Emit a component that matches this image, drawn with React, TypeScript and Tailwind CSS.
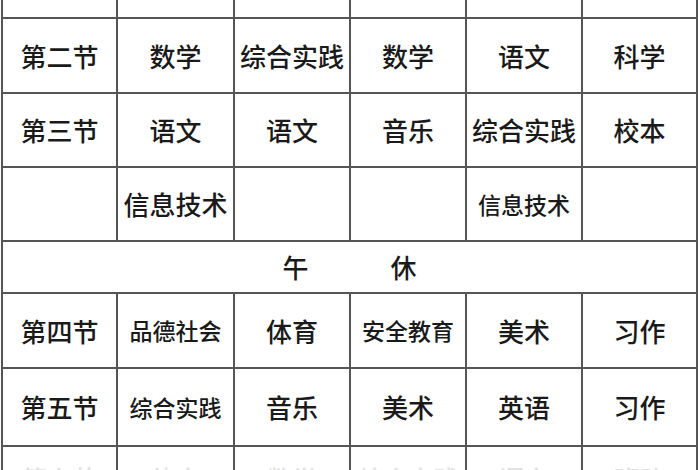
import React from "react";

type Cell = { text: string; small?: boolean };

const rows: Cell[][] = [
  [{ text: "" }, { text: "" }, { text: "" }, { text: "" }, { text: "" }, { text: "" }],
  [
    { text: "第二节" },
    { text: "数学" },
    { text: "综合实践" },
    { text: "数学" },
    { text: "语文" },
    { text: "科学" },
  ],
  [
    { text: "第三节" },
    { text: "语文" },
    { text: "语文" },
    { text: "音乐" },
    { text: "综合实践" },
    { text: "校本" },
  ],
  [
    { text: "" },
    { text: "信息技术" },
    { text: "" },
    { text: "" },
    { text: "信息技术", small: true },
    { text: "" },
  ],
];

const afternoon: Cell[][] = [
  [
    { text: "第四节" },
    { text: "品德社会", small: true },
    { text: "体育" },
    { text: "安全教育", small: true },
    { text: "美术" },
    { text: "习作" },
  ],
  [
    { text: "第五节" },
    { text: "综合实践", small: true },
    { text: "音乐" },
    { text: "美术" },
    { text: "英语" },
    { text: "习作" },
  ],
];

const lastRow = ["第六节", "体育", "数学", "综合实践", "语文", "班队"];

const cellBase =
  "flex items-center justify-center border-r-2 border-b-2 border-[#555] text-[#1a1a1a] leading-none";

function renderRow(row: Cell[], r: number) {
  return row.map((c, i) => (
    <div
      key={`${r}-${i}`}
      className={`${cellBase} ${i === 0 ? "border-l-2" : ""} ${
        c.small ? "text-[23px]" : "text-[26px]"
      }`}
    >
      {c.text}
    </div>
  ));
}

export default function App() {
  return (
    <div
      className="w-[700px] h-[470px] overflow-hidden bg-white"
      style={{ fontFamily: '"Noto Sans CJK SC", "Noto Sans", sans-serif' }}
    >
      <div className="ml-[1px] grid grid-cols-[117px_117px_116px_116px_116px_115px] grid-rows-[19px_75px_74px_74px_52px_75px_78px_78px] font-medium">
        {rows.map((row, r) => renderRow(row, r))}
        <div className="col-span-6 flex items-center justify-center gap-[82px] border-l-2 border-r-2 border-b-2 border-[#555] text-[26px] leading-none text-[#1a1a1a]">
          <span>午</span>
          <span>休</span>
        </div>
        {afternoon.map((row, r) => renderRow(row, r + 10))}
        {lastRow.map((t, i) => (
          <div
            key={`last-${i}`}
            className={`flex items-start justify-center pt-[19px] border-r-2 border-b-2 border-[#555] text-[25px] leading-none text-[#e2e2e2] ${
              i === 0 ? "border-l-2" : ""
            }`}
          >
            {t}
          </div>
        ))}
      </div>
    </div>
  );
}
